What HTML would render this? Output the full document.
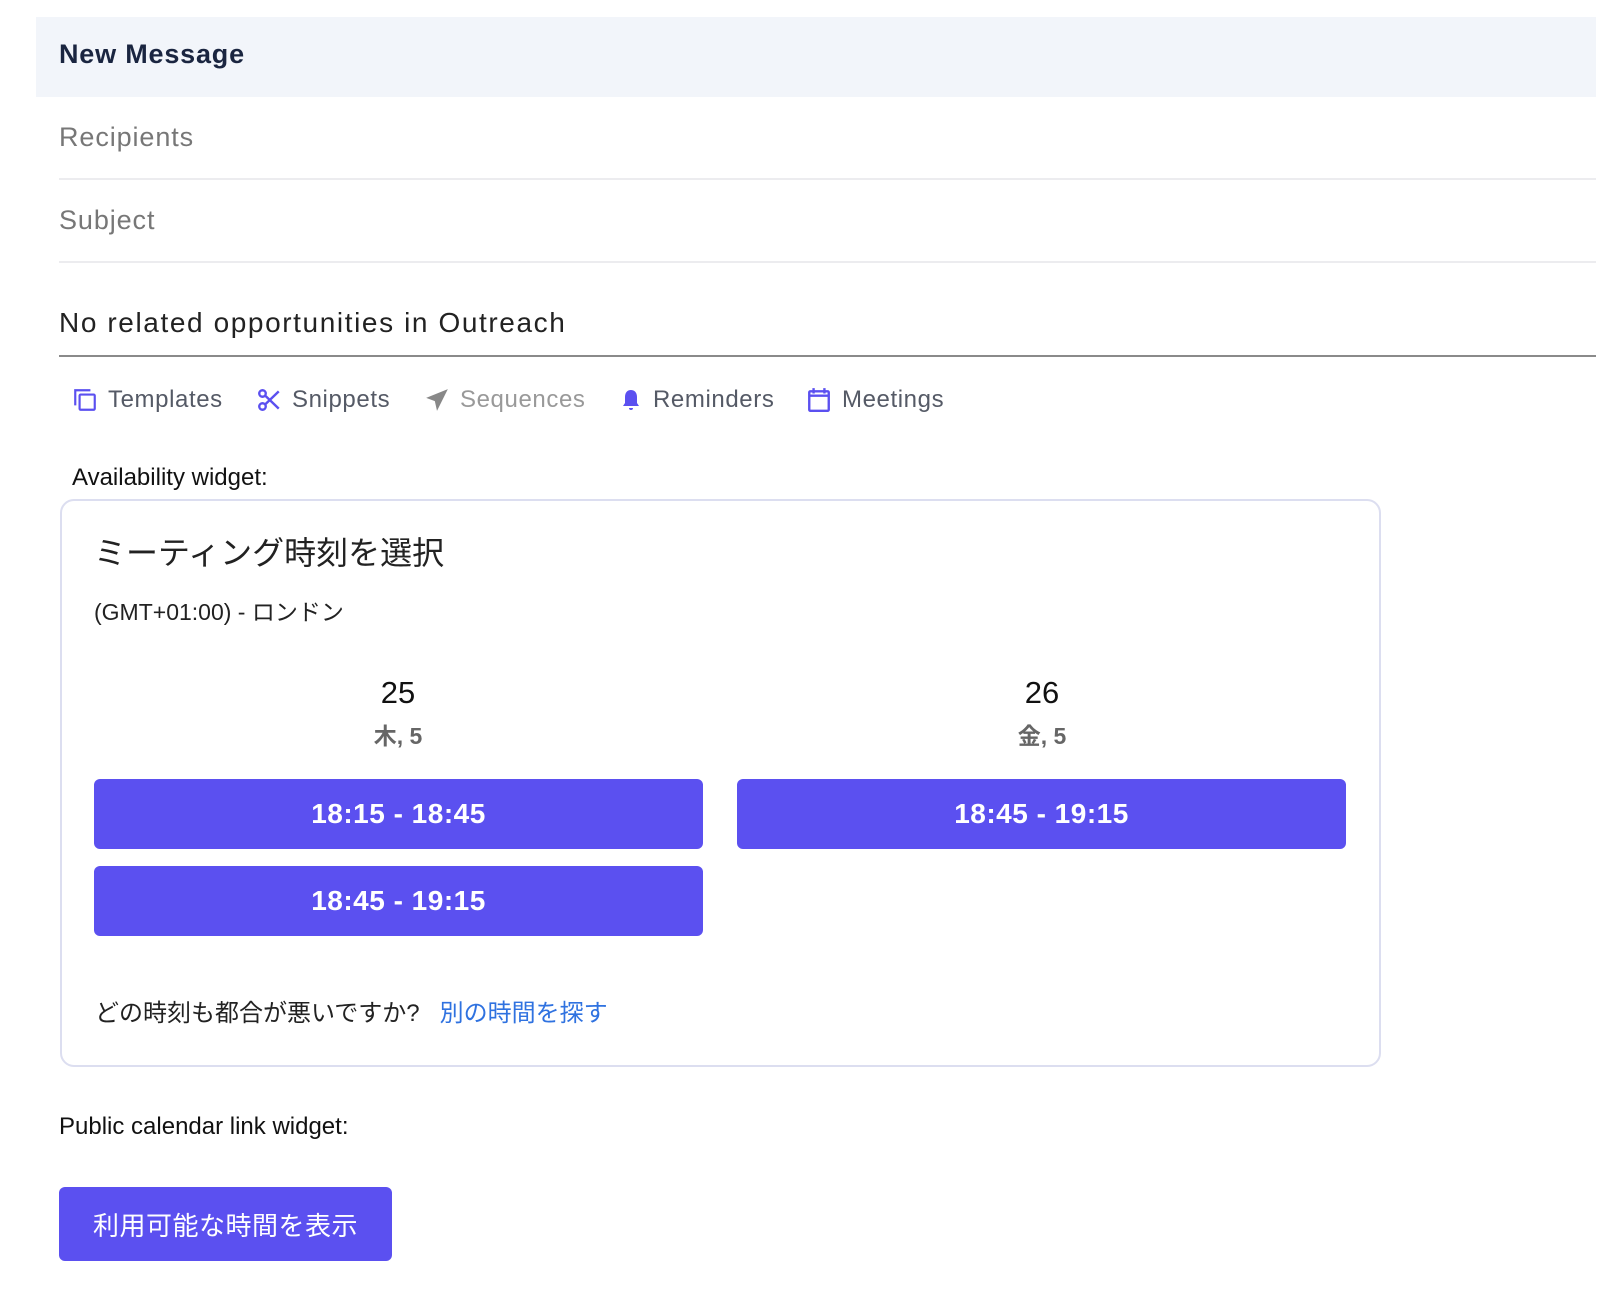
<!DOCTYPE html>
<html><head><meta charset="utf-8"><style>
*{margin:0;padding:0;box-sizing:border-box}
body{width:1616px;height:1298px;background:#fff;position:relative;overflow:hidden;font-family:"Liberation Sans","Noto Sans CJK JP",sans-serif}
.a{position:absolute;white-space:nowrap}
.hdr{left:36px;top:17px;width:1560px;height:80px;background:#f2f5fa}
.line{position:absolute;left:59px;width:1537px;height:2px;background:#ececef}
.tb{top:386px;font-size:24px;color:#555a66;display:flex;align-items:center;letter-spacing:0.6px}
.tb svg{margin-right:10px}
.btn{position:absolute;background:#5b50f0;border-radius:6px;color:#fff;font-weight:bold;font-size:28px;display:flex;align-items:center;justify-content:center;letter-spacing:0.5px}
</style></head><body>
<div class="a hdr"></div>
<div class="a" style="left:59px;top:39px;font-size:27px;font-weight:bold;color:#1a2540;letter-spacing:0.8px">New Message</div>
<div class="a" style="left:59px;top:122px;font-size:27px;color:#777;letter-spacing:0.9px">Recipients</div>
<div class="line" style="top:178px"></div>
<div class="a" style="left:59px;top:205px;font-size:27px;color:#777;letter-spacing:0.9px">Subject</div>
<div class="line" style="top:261px"></div>
<div class="a" style="left:59px;top:307px;font-size:28px;color:#222;letter-spacing:1.6px">No related opportunities in Outreach</div>
<div class="line" style="top:355px;background:#8a8a8a;height:2px"></div>

<div class="a tb" style="left:72px"><svg width="26" height="26" viewBox="0 0 24 24" fill="none" stroke="#5b50f0" stroke-width="2"><rect x="7" y="7" width="14" height="14" rx="1"/><path d="M3 17V3h14"/></svg>Templates</div>
<div class="a tb" style="left:256px"><svg width="26" height="26" viewBox="0 0 24 24" fill="none" stroke="#5b50f0" stroke-width="2.2"><circle cx="6" cy="6" r="3"/><circle cx="6" cy="18" r="3"/><path d="M8.5 8L21 20M8.5 16L21 4"/></svg>Snippets</div>
<div class="a tb" style="left:424px;color:#999"><svg width="26" height="26" viewBox="0 0 24 24" fill="#888"><path d="M22 2L2 10l8 3 2 9z"/></svg>Sequences</div>
<div class="a tb" style="left:619px"><svg width="24" height="26" viewBox="0 0 24 24" fill="#5b50f0"><path d="M12 2c-4 0-6 3-6 7v6l-2 3h16l-2-3V9c0-4-2-7-6-7zM10 20h4a2 2 0 0 1-4 0z"/></svg>Reminders</div>
<div class="a tb" style="left:806px"><svg width="26" height="26" viewBox="0 0 24 24" fill="none" stroke="#5b50f0" stroke-width="2.2"><rect x="3" y="4" width="18" height="18" rx="1"/><path d="M3 8h18M7 1v5M17 1v5"/></svg>Meetings</div>

<div class="a" style="left:72px;top:464px;font-size:24px;color:#111">Availability widget:</div>
<div class="a" style="left:60px;top:499px;width:1321px;height:568px;border:2px solid #dcdef0;border-radius:14px"></div>
<div class="a" style="left:94px;top:528px;font-size:32px;color:#222">ミーティング時刻を選択</div>
<div class="a" style="left:94px;top:593px;font-size:23px;color:#222">(GMT+01:00) - ロンドン</div>
<div class="a" style="left:298px;width:200px;text-align:center;top:675px;font-size:31px;color:#111">25</div>
<div class="a" style="left:298px;width:200px;text-align:center;top:717px;font-size:23px;font-weight:bold;color:#666">木, 5</div>
<div class="a" style="left:942px;width:200px;text-align:center;top:675px;font-size:31px;color:#111">26</div>
<div class="a" style="left:942px;width:200px;text-align:center;top:717px;font-size:23px;font-weight:bold;color:#666">金, 5</div>
<div class="btn" style="left:94px;top:779px;width:609px;height:70px">18:15 - 18:45</div>
<div class="btn" style="left:737px;top:779px;width:609px;height:70px">18:45 - 19:15</div>
<div class="btn" style="left:94px;top:866px;width:609px;height:70px">18:45 - 19:15</div>
<div class="a" style="left:95px;top:993px;font-size:24px;color:#222">どの時刻も都合が悪いですか?&nbsp;&nbsp; <span style="color:#2f72e0">別の時間を探す</span></div>

<div class="a" style="left:59px;top:1113px;font-size:24px;color:#111">Public calendar link widget:</div>
<div class="btn" style="left:59px;top:1187px;width:333px;height:74px;font-weight:normal;font-size:26px">利用可能な時間を表示</div>
</body></html>
